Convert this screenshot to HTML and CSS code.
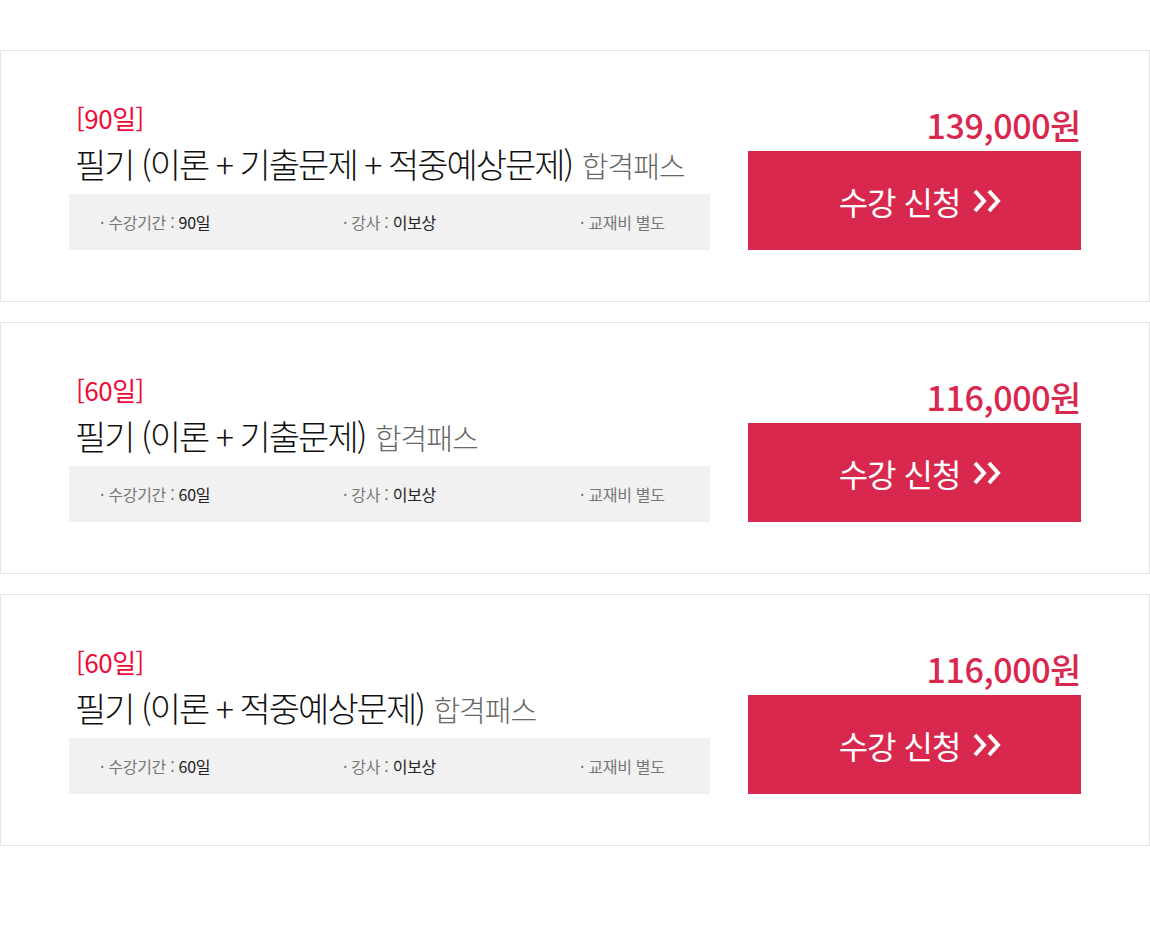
FILE: index.html
```html
<!DOCTYPE html>
<html lang="ko">

<head>
    <meta charset="UTF-8">
    <meta name="viewport" content="width=device-width, initial-scale=1.0">
    <title>합격패스 수강신청</title>
    <link rel="stylesheet" href="styles.css">
</head>

<body>
    <div class="list">
        <div class="course">
            <div class="info">
                <p class="period">[90일]</p>
                <h2 class="title">필기 (이론 + 기출문제 + 적중예상문제) <span class="sub">합격패스</span></h2>
                <ul class="meta">
                    <li>· 수강기간 : <b>90일</b></li>
                    <li>· 강사 : <b>이보상</b></li>
                    <li>· 교재비 별도</li>
                </ul>
            </div>
            <div class="buy">
                <p class="price">139,000원</p>
                <a class="apply" href="#">수강 신청
                    <svg class="arrows" viewBox="0 0 30 28" width="30" height="28"><path d="M3 4 L12 14 L3 24 M17 4 L26 14 L17 24" /></svg>
                </a>
            </div>
        </div>

        <div class="course">
            <div class="info">
                <p class="period">[60일]</p>
                <h2 class="title">필기 (이론 + 기출문제) <span class="sub">합격패스</span></h2>
                <ul class="meta">
                    <li>· 수강기간 : <b>60일</b></li>
                    <li>· 강사 : <b>이보상</b></li>
                    <li>· 교재비 별도</li>
                </ul>
            </div>
            <div class="buy">
                <p class="price">116,000원</p>
                <a class="apply" href="#">수강 신청
                    <svg class="arrows" viewBox="0 0 30 28" width="30" height="28"><path d="M3 4 L12 14 L3 24 M17 4 L26 14 L17 24" /></svg>
                </a>
            </div>
        </div>

        <div class="course">
            <div class="info">
                <p class="period">[60일]</p>
                <h2 class="title">필기 (이론 + 적중예상문제) <span class="sub">합격패스</span></h2>
                <ul class="meta">
                    <li>· 수강기간 : <b>60일</b></li>
                    <li>· 강사 : <b>이보상</b></li>
                    <li>· 교재비 별도</li>
                </ul>
            </div>
            <div class="buy">
                <p class="price">116,000원</p>
                <a class="apply" href="#">수강 신청
                    <svg class="arrows" viewBox="0 0 30 28" width="30" height="28"><path d="M3 4 L12 14 L3 24 M17 4 L26 14 L17 24" /></svg>
                </a>
            </div>
        </div>
    </div>
</body>

</html>
```

FILE: styles.css
```css
body {
    margin: 0;
    background-color: white;
    color: #222;
    font-family: "Noto Sans CJK KR", "Noto Sans", sans-serif;
}

.list {
    padding-top: 50px;
    display: flex;
    flex-direction: column;
    gap: 20px;
}

.course {
    height: 252px;
    box-sizing: border-box;
    border: 1px solid #e4e4e4;
    padding: 0 68px 51px 68px;
    display: flex;
    justify-content: space-between;
    align-items: flex-end;
}

.info {
    width: 641px;
}

.period {
    margin: 0 0 0 7px;
    font-size: 26px;
    line-height: 30px;
    color: #ee0b3a;
    letter-spacing: -0.5px;
}

.title {
    margin: 8px 0 0 6px;
    font-size: 34px;
    font-weight: 300;
    line-height: 46px;
    letter-spacing: -2px;
    color: #111;
}

.sub {
    margin-left: 2px;
    font-size: 29px;
    color: #666;
    letter-spacing: -1px;
}

.meta {
    margin: 6px 0 0;
    padding: 0 0 0 31px;
    list-style: none;
    height: 56px;
    background-color: #f1f1f1;
    display: grid;
    grid-template-columns: 243px 237px auto;
    align-items: center;
    font-size: 16px;
    color: #777;
    letter-spacing: -0.3px;
}

.meta b {
    font-weight: 400;
    color: #222;
}

.buy {
    width: 333px;
}

.price {
    margin: 0 0 6px;
    text-align: right;
    font-size: 34px;
    font-weight: 500;
    line-height: 40px;
    letter-spacing: -0.4px;
    color: #d9284e;
}

.apply {
    height: 99px;
    padding-left: 12px;
    background-color: #d9284e;
    color: white;
    text-decoration: none;
    font-size: 32px;
    font-weight: 400;
    letter-spacing: -1px;
    display: flex;
    align-items: center;
    justify-content: center;
    gap: 12px;
}

.arrows {
    fill: none;
    stroke: white;
    stroke-width: 4;
}
```
